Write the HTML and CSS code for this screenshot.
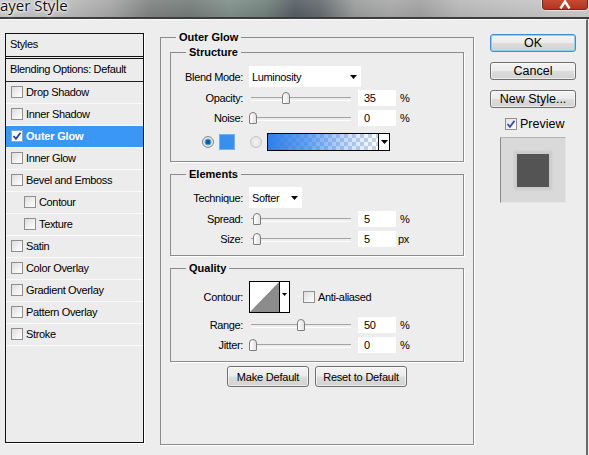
FILE: index.html
```html
<!DOCTYPE html>
<html>
<head>
<meta charset="utf-8">
<title>Layer Style</title>
<link rel="stylesheet" href="styles.css">
</head>
<body>
<div class="titlebar">
  <span class="title">ayer Style</span>
  <div class="close"><svg width="44" height="9" viewBox="0 0 44 9"><path d="M17.5 8.5 L22 1.5 L26.5 8.5" fill="none" stroke="#fff" stroke-width="2.4"/></svg></div>
</div>
<div class="content">
  <div class="styles-panel">
    <div class="sp-head">Styles</div>
    <div class="sp-blend">Blending Options: Default</div>
    <div class="sp-row"><span class="cb"></span>Drop Shadow</div>
    <div class="sp-row"><span class="cb"></span>Inner Shadow</div>
    <div class="sp-row active"><span class="cb"><svg width="10" height="10" viewBox="0 0 10 10"><path d="M1.5 5 L4 7.8 L8.5 1.8" fill="none" stroke="#2c3d9e" stroke-width="1.8"/></svg></span>Outer Glow</div>
    <div class="sp-row"><span class="cb"></span>Inner Glow</div>
    <div class="sp-row"><span class="cb"></span>Bevel and Emboss</div>
    <div class="sp-row sub"><span class="cb"></span>Contour</div>
    <div class="sp-row sub"><span class="cb"></span>Texture</div>
    <div class="sp-row"><span class="cb"></span>Satin</div>
    <div class="sp-row"><span class="cb"></span>Color Overlay</div>
    <div class="sp-row"><span class="cb"></span>Gradient Overlay</div>
    <div class="sp-row"><span class="cb"></span>Pattern Overlay</div>
    <div class="sp-row"><span class="cb"></span>Stroke</div>
  </div>

  <fieldset class="grp outer">
    <legend>Outer Glow</legend>

    <fieldset class="grp inner structure">
      <legend>Structure</legend>
      <div class="row r-select">
        <span class="lbl">Blend Mode:</span>
        <div class="select sel-blend"><span>Luminosity</span><svg width="7" height="4" viewBox="0 0 7 4"><path d="M0 0H7L3.5 4Z"/></svg></div>
      </div>
      <div class="row">
        <span class="lbl">Opacity:</span>
        <div class="slider"><span class="thumb" style="left:33px"></span></div>
        <span class="num">35</span><span class="unit">%</span>
      </div>
      <div class="row">
        <span class="lbl">Noise:</span>
        <div class="slider"><span class="thumb" style="left:0px"></span></div>
        <span class="num">0</span><span class="unit">%</span>
      </div>
      <div class="row r-color">
        <span class="radio on"></span>
        <span class="swatch"></span>
        <span class="radio off"></span>
        <div class="gradient"><span class="gfill"></span><span class="garrow"><svg width="7" height="4" viewBox="0 0 7 4"><path d="M0 0H7L3.5 4Z"/></svg></span></div>
      </div>
    </fieldset>

    <fieldset class="grp inner elements">
      <legend>Elements</legend>
      <div class="row r-select">
        <span class="lbl">Technique:</span>
        <div class="select sel-tech"><span>Softer</span><svg width="7" height="4" viewBox="0 0 7 4"><path d="M0 0H7L3.5 4Z"/></svg></div>
      </div>
      <div class="row">
        <span class="lbl">Spread:</span>
        <div class="slider"><span class="thumb" style="left:4px"></span></div>
        <span class="num">5</span><span class="unit">%</span>
      </div>
      <div class="row">
        <span class="lbl">Size:</span>
        <div class="slider"><span class="thumb" style="left:4px"></span></div>
        <span class="num">5</span><span class="unit px">px</span>
      </div>
    </fieldset>

    <fieldset class="grp inner quality">
      <legend>Quality</legend>
      <div class="row r-contour">
        <span class="lbl">Contour:</span>
        <div class="contour">
          <svg class="curve" width="29" height="30" viewBox="0 0 29 30"><rect width="29" height="30" fill="#fff"/><path d="M0 30 L29 0 V30 Z" fill="#8c8c8c"/></svg>
          <span class="carrow"><svg width="5" height="3" viewBox="0 0 5 3"><path d="M0 0H5L2.5 3Z"/></svg></span>
        </div>
        <span class="cb aa"></span><span class="aa-text">Anti-aliased</span>
      </div>
      <div class="row">
        <span class="lbl">Range:</span>
        <div class="slider"><span class="thumb" style="left:48px"></span></div>
        <span class="num">50</span><span class="unit">%</span>
      </div>
      <div class="row">
        <span class="lbl">Jitter:</span>
        <div class="slider"><span class="thumb" style="left:0px"></span></div>
        <span class="num">0</span><span class="unit">%</span>
      </div>
    </fieldset>

    <div class="btn-row">
      <button class="btn small w-make">Make Default</button>
      <button class="btn small w-reset">Reset to Default</button>
    </div>
  </fieldset>

  <div class="side">
    <button class="btn big ok">OK</button>
    <button class="btn big">Cancel</button>
    <button class="btn big">New Style...</button>
    <div class="preview-row"><span class="cb"><svg width="10" height="10" viewBox="0 0 10 10"><path d="M1.5 5 L4 7.8 L8.5 1.8" fill="none" stroke="#3b4aa8" stroke-width="1.8"/></svg></span><span>Preview</span></div>
    <div class="preview-box"><span class="preview-sq"></span></div>
  </div>
</div>
</body>
</html>
```

FILE: styles.css
```css
* { box-sizing: border-box; }
html, body { margin: 0; padding: 0; }
body {
  width: 589px;
  height: 455px;
  overflow: hidden;
  background: #ededed;
  font-family: "Liberation Sans", Arial, sans-serif;
  font-size: 11px;
  letter-spacing: -0.35px;
  color: #000;
}

/* ---------- title bar ---------- */
.titlebar {
  height: 19px;
  display: flex;
  align-items: flex-start;
  border-bottom: 2px solid #3d3d3d;
  background:
    linear-gradient(to bottom, rgba(255,255,255,0.1), rgba(0,0,0,0.04)),
    linear-gradient(to right, #c8c8c8 0px, #bebebe 60px, #a6a6a6 110px, #7e8180 150px, #737b79 190px, #7e8e88 230px, #70807a 265px, #545c64 295px, #62696c 320px, #9a9c9c 355px, #a8a8a8 390px, #a0a0a0 420px, #b8b8b8 460px, #c2c2c2 520px, #cbcbcb 589px);
}
.title {
  font-family: "Open Sans", "Liberation Sans", sans-serif;
  font-size: 15px;
  line-height: 10px;
  letter-spacing: 0;
  margin-top: 0;
  color: #111;
  text-shadow: 0 0 6px #fff, 0 0 3px #fff, 0 0 2px #fff;
}
.close {
  margin-left: auto;
  margin-right: 1px;
  width: 46px;
  height: 10px;
  display: flex;
  border: 1px solid #6e2a1e;
  border-top: none;
  border-radius: 0 0 4px 4px;
  background: linear-gradient(to bottom, #c94a33, #b23520);
  box-shadow: 0 0 0 1px rgba(235,235,235,0.8);
}

/* ---------- main content ---------- */
.content {
  display: flex;
  align-items: flex-start;
  padding-top: 10px;
  height: 436px;
  border-top: 1px solid #fbfbfb;
  border-right: 2px solid #6a6a6a;
  margin-right: 1px;
}

/* ---------- styles list ---------- */
.styles-panel {
  margin-left: 5px;
  margin-top: 3px;
  width: 139px;
  height: 410px;
  border: 1px solid #111;
  background: #ececec;
  box-shadow: 1px 1px 0 #fff;
}
.sp-head {
  height: 25px;
  padding: 0 0 0 4px;
  line-height: 21px;
  border-bottom: 3px double #111;
}
.sp-blend {
  height: 23px;
  padding-left: 4px;
  line-height: 21px;
  border-bottom: 1px solid #222;
}
.sp-row {
  height: 22px;
  display: flex;
  align-items: center;
  padding-left: 5px;
  padding-bottom: 1px;
  border-bottom: 1px solid #fafafa;
}
.sp-row.sub { padding-left: 18px; }
.sp-row.active {
  background: #3a97f6;
  color: #fff;
  font-weight: bold;
  letter-spacing: -0.2px;
}
.cb {
  width: 12px;
  height: 12px;
  flex: none;
  margin-right: 3px;
  border: 1px solid #8e8f8f;
  background: linear-gradient(135deg, #dcdcdc, #f6f6f6 70%, #ffffff);
  display: flex;
  align-items: center;
  justify-content: center;
}
.sp-row.active .cb { background: #fff; border-color: #8aa8c8; }

/* ---------- group boxes ---------- */
.grp {
  margin: 0;
  padding: 0;
  min-width: 0;
  border: 1px solid #8c8c8c;
  box-shadow: 1px 1px 0 #fff;
}
.grp legend {
  font-weight: bold;
  letter-spacing: 0;
  line-height: 15px;
  padding: 0 3px;
  margin-left: 15px;
}
.outer {
  margin-left: 16px;
  width: 314px;
  height: 415px;
}
.inner {
  margin: 0 9px;
}
.structure { padding-bottom: 9px; }
.elements { margin-top: 5px; padding-bottom: 6px; }
.quality { margin-top: 5px; padding-bottom: 6px; }

.row {
  display: flex;
  align-items: center;
  height: 20px;
}
.lbl {
  width: 72px;
  flex: none;
  text-align: right;
}
.r-select { height: 21px; }
.structure .r-select { margin-top: 6px; margin-bottom: 1px; }
.elements .r-select { margin-top: 5px; margin-bottom: 1px; }

.select {
  margin-left: 6px;
  height: 21px;
  background: #fff;
  display: flex;
  align-items: center;
  justify-content: space-between;
  padding: 1px 4px 0 3px;
}
.sel-blend { width: 112px; }
.sel-tech { width: 53px; }

.slider {
  position: relative;
  margin-left: 6px;
  width: 102px;
  height: 12px;
  flex: none;
}
.slider::before {
  content: "";
  position: absolute;
  left: 2px;
  right: 0;
  top: 5px;
  height: 2px;
  border-top: 1px solid #a3a3a3;
  border-bottom: 1px solid #fdfdfd;
}
.thumb {
  position: absolute;
  top: 0;
  width: 8px;
  height: 12px;
  border: 1px solid #7d7d7d;
  border-radius: 4px 4px 1px 1px;
  background: linear-gradient(to right, #ffffff, #e2e2e2);
}
.num {
  margin-left: 7px;
  width: 38px;
  height: 16px;
  flex: none;
  background: #fff;
  padding-left: 6px;
  line-height: 17px;
}
.unit { margin-left: 4px; }
.unit.px { margin-left: 2px; }

/* color row */
.r-color { margin-top: 4px; }
.radio {
  width: 12px;
  height: 12px;
  flex: none;
  border-radius: 50%;
}
.radio.on {
  margin-left: 31px;
  border: 1px solid #8a8a8a;
  background: radial-gradient(circle, #0e5a9a 0 2px, #3aa0e0 2.5px 3.2px, #e8e8e8 3.7px, #c8c8c8 100%);
}
.radio.off {
  margin-left: 15px;
  border: 1px solid #c6c6c6;
  background: radial-gradient(circle, #f4f4f4, #dcdcdc);
}
.swatch {
  margin-left: 5px;
  width: 16px;
  height: 16px;
  background: #3a8fea;
  border: 1px solid #6fb0f0;
}
.gradient {
  margin-left: 5px;
  width: 123px;
  height: 18px;
  border: 1px solid #000;
  display: flex;
}
.gfill {
  flex: 1;
  background:
    linear-gradient(to right, #2f7fe8 0%, rgba(52,130,235,0.75) 35%, rgba(70,140,235,0.25) 75%, rgba(80,150,240,0) 100%),
    repeating-conic-gradient(#c8d4ea 0 25%, #ffffff 0 50%) 0 0 / 8px 8px;
}
.garrow {
  width: 11px;
  border-left: 1px solid #000;
  background: #fff;
  display: flex;
  align-items: center;
  justify-content: center;
}

/* quality */
.r-contour { height: 32px; margin-top: 5px; margin-bottom: 2px; }
.contour {
  margin-left: 6px;
  width: 41px;
  height: 32px;
  border: 1px solid #000;
  display: flex;
}
.curve { display: block; }
.carrow {
  flex: 1;
  border-left: 1px solid #000;
  background: #fff;
  display: flex;
  justify-content: center;
  padding-top: 11px;
}
.cb.aa { margin-left: 13px; margin-right: 3px; }

/* buttons */
.btn {
  font-family: "Liberation Sans", Arial, sans-serif;
  letter-spacing: -0.2px;
  color: #000;
  border: 1px solid #707070;
  border-radius: 3px;
  background: linear-gradient(to bottom, #f4f4f4 0%, #ebebeb 48%, #dcdcdc 52%, #d2d2d2 100%);
  padding: 0;
  box-shadow: inset 0 0 0 1px rgba(255,255,255,0.6);
}
.btn-row {
  display: flex;
  justify-content: center;
  gap: 6px;
  margin-top: 4px;
}
.btn.small { height: 21px; font-size: 11px; }
.w-make { width: 82px; }
.w-reset { width: 92px; }

.side {
  margin-left: 16px;
  width: 86px;
  display: flex;
  flex-direction: column;
}
.btn.big {
  height: 18px;
  font-size: 12.5px;
  letter-spacing: 0;
  margin-top: 10px;
  line-height: 15px;
}
.btn.big.ok {
  margin-top: 4px;
  border-color: #3c8fcf;
  box-shadow: inset 0 0 0 1px #8fd0f5;
}
.preview-row {
  margin-top: 8px;
  height: 16px;
  display: flex;
  align-items: center;
  padding-left: 15px;
  font-size: 12.5px;
  letter-spacing: 0;
}
.preview-row .cb { margin-right: 3px; background: linear-gradient(135deg, #e2e2e2, #fdfdfd); }
.preview-box {
  margin-top: 5px;
  margin-left: 10px;
  width: 66px;
  height: 66px;
  background: #d9d9d9;
  border-left: 1px solid #8a8a8a;
  border-top: 1px solid #b4b4b4;
  border-right: 1px solid #e6e6e6;
  border-bottom: 1px solid #e6e6e6;
  display: flex;
  align-items: center;
  justify-content: center;
}
.preview-sq {
  width: 32px;
  height: 33px;
  background: #545454;
  box-shadow: 0 0 2px 3px #cbcbcb;
}
```
